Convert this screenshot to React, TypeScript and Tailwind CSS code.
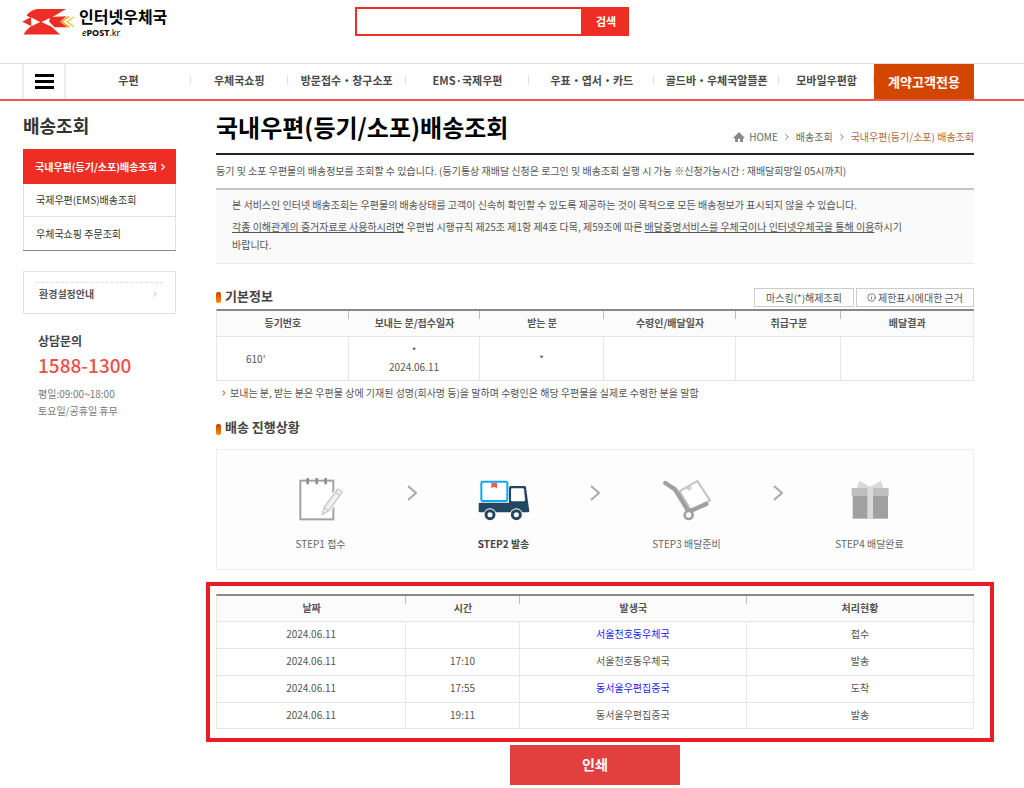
import { ChevronRight, Info } from "lucide-react";

const menus = [
  "우편",
  "우체국쇼핑",
  "방문접수・창구소포",
  "EMS·국제우편",
  "우표・엽서・카드",
  "골드바・우체국알뜰폰",
  "모바일우편함",
];

const infoHeads = [
  "등기번호",
  "보내는 분/접수일자",
  "받는 분",
  "수령인/배달일자",
  "취급구분",
  "배달결과",
];

const history = [
  { date: "2024.06.11", time: "", office: "서울천호동우체국", link: true, status: "접수" },
  { date: "2024.06.11", time: "17:10", office: "서울천호동우체국", link: false, status: "발송" },
  { date: "2024.06.11", time: "17:55", office: "동서울우편집중국", link: true, status: "도착" },
  { date: "2024.06.11", time: "19:11", office: "동서울우편집중국", link: false, status: "발송" },
];

function LogoMark() {
  return (
    <svg viewBox="0 0 160 84" className="mt-px h-[28px] w-[53px]" aria-hidden="true">
      <path d="M14 23 C22 10 36 3 52 3 L133 3 L88 29 L57 46 L30 30 Z" fill="#ee2e24" />
      <path d="M5 80 C10 68 20 60 32 52 L57 40 L84 52 L115 80 Z" fill="#ee2e24" />
      <path d="M1 41 L27 27 L29 55 Z" fill="#ee2e24" />
      <path d="M29 29 L55 42 L29 54 Z" fill="#fff" />
      <path d="M86 29 L59 42 L86 55 Z" fill="#fff" />
      <path d="M84 27 L134 25 L115 41 L137 58 L98 58 L82 41 Z" fill="#ee2e24" />
      <path d="M142 25 L120 41 L142 58" fill="none" stroke="#f6a821" strokeWidth="5" />
      <path d="M156 27 L136 41 L156 56" fill="none" stroke="#f6c34a" strokeWidth="4" />
    </svg>
  );
}

function HomeIcon() {
  return (
    <svg viewBox="0 0 32 28" className="h-[10px] w-3" fill="#888" aria-hidden="true">
      <path d="M16 0 L32 16 L29 18 H27 V28 H19 V19 H13 V28 H5 V18 H3 L0 16 Z" />
    </svg>
  );
}

function NoteIcon() {
  return (
    <svg viewBox="0 0 132 132" className="h-[44px] w-[44px]" aria-hidden="true">
      <rect x="4" y="11" width="99" height="116" fill="#fff" stroke="#a3a3a3" strokeWidth="6" />
      <path d="M26 3V22M53 3V22M80 3V22" stroke="#8f8f8f" strokeWidth="8" />
      <path
        d="M117 36 L130 45 L89 101 L70 112 L75 92 Z"
        fill="#eee"
        stroke="#fdfdfd"
        strokeWidth="12"
      />
      <path
        d="M117 36 L130 45 L89 101 L70 112 L75 92 Z M110 46 L122 55 M75 92 L89 101"
        fill="#f2f2f2"
        stroke="#c9c9c9"
        strokeWidth="4"
      />
    </svg>
  );
}

function TruckIcon() {
  return (
    <svg viewBox="0 0 156 132" className="h-[44px] w-[52px]" aria-hidden="true">
      <rect x="10" y="14" width="78" height="58" rx="5" fill="#fff" stroke="#0ba9f5" strokeWidth="6" />
      <path d="M40 18H57V34L48 29L40 34Z" fill="#f8545c" />
      <path
        d="M6 77H93V32Q93 27 98 27H139Q143 27 144 31L154 103Q154 106 151 106H5Q2 106 2 103V81Q2 77 6 77Z"
        fill="#234763"
      />
      <path d="M102 34H134Q137 34 138 37L141 69Q141 73 137 73H102Q99 73 99 69V37Q99 34 102 34Z" fill="#fff" />
      <circle cx="36" cy="113" r="19" fill="#fff" />
      <circle cx="115" cy="113" r="19" fill="#fff" />
      <circle cx="36" cy="113" r="12" fill="none" stroke="#234763" strokeWidth="9" />
      <circle cx="115" cy="113" r="12" fill="none" stroke="#234763" strokeWidth="9" />
    </svg>
  );
}

function CartIcon() {
  return (
    <svg viewBox="0 0 150 132" className="h-[44px] w-[50px]" aria-hidden="true">
      <path
        d="M52 43 L106 12 L144 70 L88 101 Z"
        fill="#fff"
        stroke="#c2c2c2"
        strokeWidth="6"
        strokeLinejoin="round"
      />
      <path d="M72 34 L86 26 L91 34 L79 43 Z" fill="#d2d2d2" />
      <path
        d="M10 18 L39 37 L80 104 L133 81"
        fill="none"
        stroke="#a0a0a0"
        strokeWidth="13"
        strokeLinecap="round"
        strokeLinejoin="round"
      />
      <circle cx="80" cy="114" r="12" fill="#fff" stroke="#a0a0a0" strokeWidth="8" />
    </svg>
  );
}

function GiftIcon() {
  return (
    <svg viewBox="0 0 114 132" className="h-[44px] w-[38px]" aria-hidden="true">
      <path d="M25 11 L57 29 L90 11 L97 33 H17 Z" fill="#d9d9d9" />
      <rect x="5" y="56" width="106" height="69" fill="#a0a0a0" />
      <rect x="2" y="33" width="111" height="24" fill="#bfbfbf" />
      <rect x="49" y="33" width="17" height="92" fill="#dadada" />
    </svg>
  );
}

const steps = [
  { label: "STEP1 접수", icon: <NoteIcon />, active: false },
  { label: "STEP2 발송", icon: <TruckIcon />, active: true },
  { label: "STEP3 배달준비", icon: <CartIcon />, active: false },
  { label: "STEP4 배달완료", icon: <GiftIcon />, active: false },
];

function HeadCell({ children }: { children: string }) {
  return (
    <th className="group relative border-b border-[#e5e5e5] bg-[#fbfbfb] pb-[2px] font-bold last:border-r">
      {children}
      <span className="absolute top-0 right-0 h-2 w-px bg-[#bbb] group-last:hidden"></span>
    </th>
  );
}

function SectionTitle({ children }: { children: string }) {
  return (
    <h2 className="flex items-center gap-1 text-[13px] leading-5 font-bold text-[#444]">
      <span className="mt-1 h-[11px] w-[5px] rounded-[2px] bg-gradient-to-b from-[#c9400c] to-[#ff8a00]"></span>
      {children}
    </h2>
  );
}

export default function App() {
  return (
    <div className="bg-white font-['Noto_Sans_CJK_KR','Noto_Sans',sans-serif] text-[10px] leading-4 text-[#555]">
      {/* Header */}
      <header>
        <div className="grid h-[63px] grid-cols-[333px_274px_1fr] items-start pl-[22px]">
          <a href="#" className="flex items-start gap-1 pt-[7px]">
            <LogoMark />
            <span className="flex flex-col text-black">
              <span className="text-[16px] leading-[18px] font-bold">인터넷우체국</span>
              <span className="mt-[2px] pl-[3px] font-['Noto_Sans',sans-serif] text-[9px] leading-3">
                <i>e</i>
                <b>POST</b>.kr
              </span>
            </span>
          </a>
          <form className="mt-[7px] flex h-[29px]">
            <input
              type="text"
              aria-label="검색어"
              className="min-w-0 flex-1 border-2 border-[#ee2e24] px-2 outline-none"
            />
            <button type="button" className="w-[46px] bg-[#ee2e24] pb-[2px] text-[11px] font-bold text-white">
              검색
            </button>
          </form>
        </div>

        <nav className="flex h-[38px] border-t border-b-2 border-t-[#ddd] border-b-[#ee5a4d] pr-[50px] pl-[22px]">
          <button
            type="button"
            aria-label="전체메뉴"
            className="flex w-[44px] flex-col items-center justify-center gap-[3px] border-x-2 border-[#ececec]"
          >
            <span className="h-[3px] w-[19px] bg-black"></span>
            <span className="h-[3px] w-[19px] bg-black"></span>
            <span className="h-[3px] w-[19px] bg-black"></span>
          </button>
          <ul className="grid flex-1 grid-cols-[125fr_97fr_118fr_124fr_125fr_125fr_95fr] items-center pb-[3px] text-center text-[11px] font-bold whitespace-nowrap text-[#4a4a4a]">
            {menus.map((m) => (
              <li key={m} className="relative">
                <a href="#">{m}</a>
                <span className="absolute top-1 right-0 h-2 w-px bg-[#ddd]"></span>
              </li>
            ))}
          </ul>
          <a
            href="#"
            className="flex w-[100px] items-center justify-center bg-[#d24600] text-[13px] font-bold text-white"
          >
            계약고객전용
          </a>
        </nav>
      </header>

      <div className="flex gap-10 pr-[50px] pl-[23px]">
        {/* Sidebar */}
        <aside className="w-[153px] shrink-0">
          <h2 className="flex h-[48px] items-center text-[18px] font-bold text-[#333]">배송조회</h2>
          <ul className="border-b border-[#888] text-[#333]">
            <li>
              <a
                href="#"
                className="flex h-[35px] items-center justify-between bg-[#ee2e24] pr-2 pl-3 font-bold whitespace-nowrap text-white"
              >
                국내우편(등기/소포)배송조회
                <ChevronRight size={10} strokeWidth={3} className="shrink-0" />
              </a>
            </li>
            <li>
              <a
                href="#"
                className="flex h-[33px] items-center border-x border-b border-[#e2e2e2] pl-3"
              >
                국제우편(EMS)배송조회
              </a>
            </li>
            <li>
              <a href="#" className="flex h-[33px] items-center border-x border-[#e2e2e2] pl-3">
                우체국쇼핑 주문조회
              </a>
            </li>
          </ul>

          <div className="mt-5 h-[43px] border border-[#e2e2e2] px-3 pt-[10px]">
            <a
              href="#"
              className="flex items-center justify-between border-t border-dashed border-[#ddd] px-[3px] pt-[3px] font-bold"
            >
              환경설정안내
              <ChevronRight size={10} className="text-[#bbb]" />
            </a>
          </div>

          <div className="mt-[17px] pl-[15px]">
            <h3 className="text-[12px] leading-5 font-bold text-[#444]">상담문의</h3>
            <p className="text-[19px] leading-7 font-medium text-[#ee5048]">1588-1300</p>
            <p className="mt-[6px] leading-[17px] text-[#777]">
              평일:09:00~18:00
              <br />
              토요일/공휴일 휴무
            </p>
          </div>
        </aside>

        <main className="min-w-0 flex-1">
          <div className="flex h-[54px] items-center justify-between border-b-2 border-[#222]">
            <h1 className="text-[24px] leading-8 font-bold text-black">국내우편(등기/소포)배송조회</h1>
            <div className="flex items-center gap-1 pt-5 text-[#666]">
              <HomeIcon />
              <a href="#">HOME</a>
              <ChevronRight size={10} />
              <a href="#">배송조회</a>
              <ChevronRight size={10} />
              <a href="#" className="text-[#b5683a]">
                국내우편(등기/소포) 배송조회
              </a>
            </div>
          </div>

          <p className="pt-[7px] pb-[9px] leading-[17px]">
            등기 및 소포 우편물의 배송정보를 조회할 수 있습니다. (등기통상 재배달 신청은 로그인 및
            배송조회 실행 시 가능 ※신청가능시간 : 재배달희망일 05시까지)
          </p>

          <div className="border-t-2 border-b border-t-[#c4c4c4] border-b-[#e8e8e8] bg-[#fafafa] px-4 pt-[6px] pb-[9px] leading-[18px]">
            <p>
              본 서비스인 인터넷 배송조회는 우편물의 배송상태를 고객이 신속히 확인할 수 있도록 제공하는
              것이 목적으로 모든 배송정보가 표시되지 않을 수 있습니다.
            </p>
            <p className="mt-1">
              <u>각종 이해관계의 증거자료로 사용하시려면</u> 우편법 시행규칙 제25조 제1항 제4호 다목,
              제59조에 따른 <u>배달증명서비스를 우체국이나 인터넷우체국을 통해 이용</u>하시기
              <br />
              바랍니다.
            </p>
          </div>

          {/* Basic info */}
          <div className="mt-6 mb-[2px] flex h-[19px] items-center justify-between">
            <div className="pb-1">
              <SectionTitle>기본정보</SectionTitle>
            </div>
            <div className="flex h-full gap-[2px]">
              <button type="button" className="w-[100px] border border-[#ccc]">
                마스킹(*)해제조회
              </button>
              <button
                type="button"
                className="flex w-[118px] items-center justify-center gap-[2px] border border-[#ccc]"
              >
                <Info size={9} />
                제한표시에대한 근거
              </button>
            </div>
          </div>
          <table className="w-full table-fixed border-separate border-spacing-0 border-t-2 border-l border-t-[#888] border-l-[#e5e5e5] text-center">
            <colgroup>
              <col className="w-[17.4%]" />
              <col className="w-[17.4%]" />
              <col className="w-[16.3%]" />
              <col className="w-[17.5%]" />
              <col className="w-[13.9%]" />
              <col className="w-[17.5%]" />
            </colgroup>
            <thead>
              <tr className="h-[26px]">
                {infoHeads.map((h) => (
                  <HeadCell key={h}>{h}</HeadCell>
                ))}
              </tr>
            </thead>
            <tbody>
              <tr className="h-[44px] *:border-r *:border-b *:border-[#e5e5e5]">
                <td className="pl-[29px] text-left">610'</td>
                <td>
                  *
                  <br />
                  2024.06.11
                </td>
                <td>*</td>
                <td></td>
                <td></td>
                <td></td>
              </tr>
            </tbody>
          </table>
          <p className="mt-1 flex items-center gap-[2px] pl-1">
            <ChevronRight size={8} strokeWidth={4} className="text-[#dd8a55]" />
            보내는 분, 받는 분은 우편물 상에 기재된 성명(회사명 등)을 말하며 수령인은 해당 우편물을 실제로
            수령한 분을 말함
          </p>

          {/* Progress */}
          <div className="mt-4 mb-3">
            <SectionTitle>배송 진행상황</SectionTitle>
          </div>
          <ol className="grid grid-cols-4 border border-[#eee] bg-[#fdfdfd] px-3 pt-[27px] pb-[17px]">
            {steps.map((s) => (
              <li key={s.label} className="group relative flex flex-col items-center gap-[15px]">
                {s.icon}
                <span className={s.active ? "font-bold text-[#444]" : "text-[#666]"}>{s.label}</span>
                <svg
                  viewBox="0 0 10 16"
                  className="absolute top-2 -right-[5px] h-4 w-[10px] group-last:hidden"
                  aria-hidden="true"
                >
                  <path d="M1 1 L9 8 L1 15" fill="none" stroke="#aaa" strokeWidth="2" />
                </svg>
              </li>
            ))}
          </ol>

          {/* Delivery history */}
          <div className="mt-3 -mr-5 -ml-[10px] border-4 border-[#ed1c24] pt-2 pb-[9px] pr-4 pl-[6px]">
            <table className="w-full table-fixed border-separate border-spacing-0 border-t-2 border-l border-t-[#888] border-l-[#e5e5e5] text-center">
              <colgroup>
                <col className="w-[25%]" />
                <col className="w-[15%]" />
                <col className="w-[30%]" />
                <col className="w-[30%]" />
              </colgroup>
              <thead>
                <tr className="h-[26px]">
                  <HeadCell>날짜</HeadCell>
                  <HeadCell>시간</HeadCell>
                  <HeadCell>발생국</HeadCell>
                  <HeadCell>처리현황</HeadCell>
                </tr>
              </thead>
              <tbody>
                {history.map((r, i) => (
                  <tr
                    key={i}
                    className="h-[27px] *:border-r *:border-b *:border-[#e5e5e5] *:pb-[2px] last:h-[26px]"
                  >
                    <td>{r.date}</td>
                    <td>{r.time}</td>
                    <td>
                      {r.link ? (
                        <a href="#" className="text-[#1a1aff]">
                          {r.office}
                        </a>
                      ) : (
                        r.office
                      )}
                    </td>
                    <td>{r.status}</td>
                  </tr>
                ))}
              </tbody>
            </table>
          </div>
          <button
            type="button"
            className="mx-auto mt-[3px] block h-10 w-[170px] bg-[#e23f3f] pb-[2px] text-[14px] font-bold text-white"
          >
            인쇄
          </button>
        </main>
      </div>
    </div>
  );
}
